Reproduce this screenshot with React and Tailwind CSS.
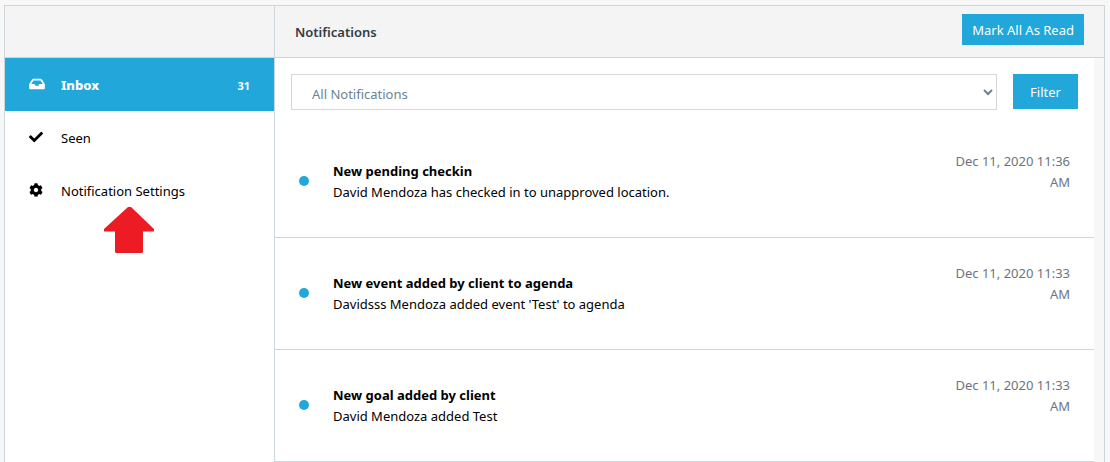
import React, { useState } from 'react';
import { FaInbox, FaCheck, FaCog } from 'react-icons/fa';

const menuItems = [
  { id: 'inbox', label: 'Inbox', icon: FaInbox, iconSize: 'w-4', count: 31 },
  { id: 'seen', label: 'Seen', icon: FaCheck, iconSize: 'w-[14px]' },
  { id: 'settings', label: 'Notification Settings', icon: FaCog, iconSize: 'w-[14px]', pointer: true },
];

const notifications = [
  {
    id: 1,
    title: 'New pending checkin',
    text: 'David Mendoza has checked in to unapproved location.',
    date: 'Dec 11, 2020 11:36 AM',
  },
  {
    id: 2,
    title: 'New event added by client to agenda',
    text: "Davidsss Mendoza added event 'Test' to agenda",
    date: 'Dec 11, 2020 11:33 AM',
  },
  {
    id: 3,
    title: 'New goal added by client',
    text: 'David Mendoza added Test',
    date: 'Dec 11, 2020 11:33 AM',
  },
];

const PointerArrow = () => (
  <svg
    className="absolute left-[99px] top-[43px] w-[51px] h-[47px] pointer-events-none"
    viewBox="0 0 51 47"
    aria-hidden="true"
  >
    <path d="M24 0h3L50 22v2.500H39V45l-1 1H12l-1-1V24.500H0V22z" fill="#ed1c24" />
  </svg>
);

const Sidebar = ({ active, onSelect }) => (
  <aside className="w-[270px] shrink-0 border-r border-[#ccd6db] bg-white">
    <div className="h-[52px] border-b border-[#ccd6db] bg-[#f4f4f4]" />
    <nav>
      {menuItems.map((item) => {
        const Icon = item.icon;
        const isActive = item.id === active;
        return (
          <div key={item.id} className="relative">
            <button
              type="button"
              onClick={() => onSelect(item.id)}
              className={`flex w-full items-center px-6 pt-[17px] pb-[15px] leading-[21px] text-left ${
                isActive ? 'bg-[#21a7da] text-white font-extrabold' : 'text-black'
              }`}
            >
              <span className="w-8 shrink-0 pb-[3px]">
                <Icon className={`h-[14px] ${item.iconSize}`} />
              </span>
              <span className="flex-1">{item.label}</span>
              {item.count && <span className="text-[11px] font-bold">{item.count}</span>}
            </button>
            {item.pointer && <PointerArrow />}
          </div>
        );
      })}
    </nav>
  </aside>
);

const NotificationRow = ({ item }) => (
  <li className="flex items-start border-b border-[#ccd6db] pl-6 pr-6 pb-[34px] pt-[25px] leading-[21px]">
    <span className="mt-[25px] h-[10px] w-[10px] shrink-0 rounded-full bg-[#21a7da]" />
    <div className="mt-[10px] ml-6 flex-1 text-black">
      <h3 className="font-bold">{item.title}</h3>
      <p>{item.text}</p>
    </div>
    <time className="w-[130px] text-right text-[#6c757d]">{item.date}</time>
  </li>
);

const App = () => {
  const [active, setActive] = useState('inbox');
  const [filter, setFilter] = useState('all');

  return (
    <div className="min-h-screen bg-[#f7f7f7] pt-[5px] pl-1 pr-[5px] flex font-['Noto_Sans',sans-serif] text-[13px]">
      <div className="flex flex-1 border-x border-t border-[#ccd6db]">
        <Sidebar active={active} onSelect={setActive} />

        <main className="flex-1 min-w-0">
          <header className="flex h-[52px] items-start justify-between border-b border-[#ccd6db] bg-[#f4f4f4] pl-5 pr-5 pt-2">
            <h2 className="mt-2 font-semibold leading-[21px] text-[#333b44]">Notifications</h2>
            <button type="button" className="h-[31px] bg-[#21a7da] px-[10px] pt-[2px] text-white">
              Mark All As Read
            </button>
          </header>

          <div className="mr-[10px] bg-white">
            <div className="flex gap-4 px-4 pt-4 pb-4">
              <select
                aria-label="Filter notifications"
                value={filter}
                onChange={(e) => setFilter(e.target.value)}
                className="h-9 flex-1 min-w-0 border border-[#d5d8da] bg-white pl-4 pt-[3px] text-[#6c8490]"
              >
                <option value="all">All Notifications</option>
              </select>
              <button type="button" className="h-[35px] w-[65px] bg-[#21a7da] pt-[2px] text-white">
                Filter
              </button>
            </div>

            <ul>
              {notifications.map((item) => (
                <NotificationRow key={item.id} item={item} />
              ))}
            </ul>
          </div>
        </main>
      </div>
    </div>
  );
};

export default App;
